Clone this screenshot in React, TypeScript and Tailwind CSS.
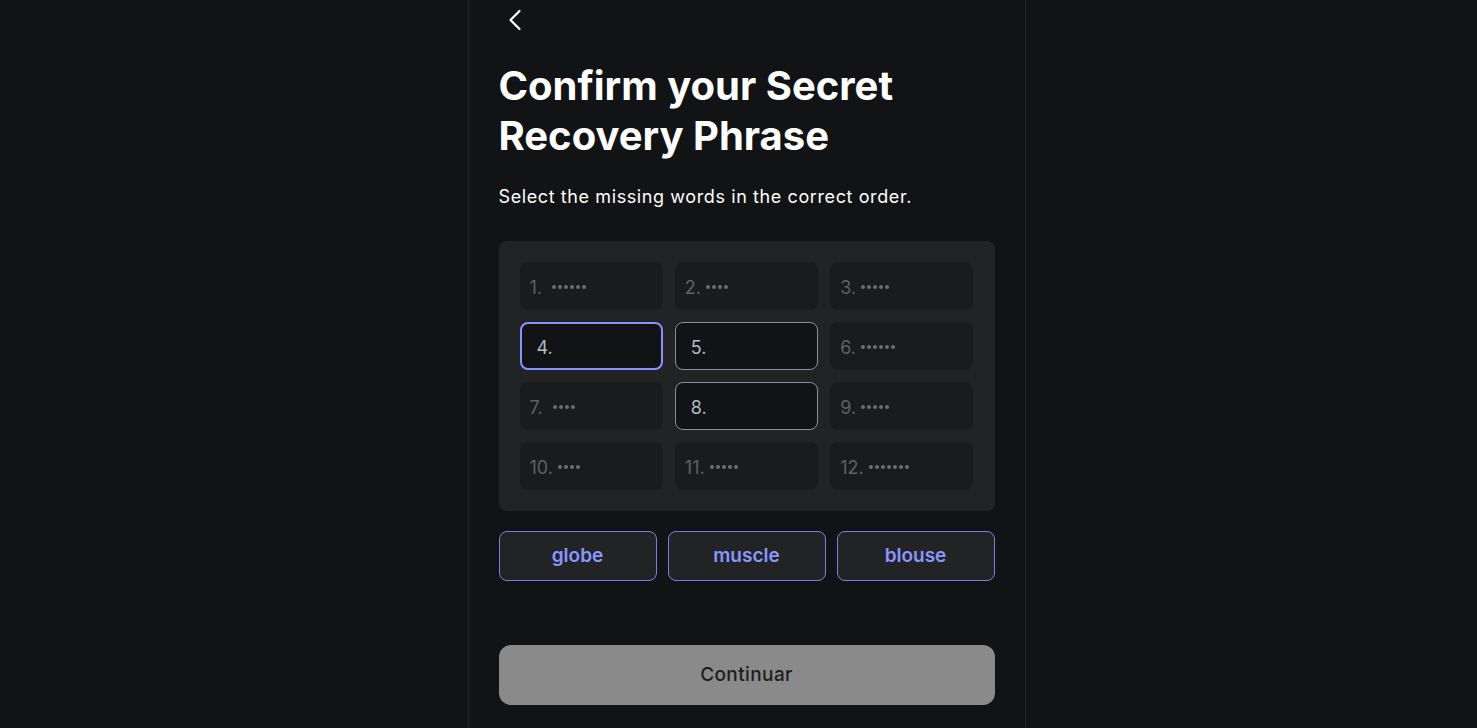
import React from "react";

const cells: { n: number; dots?: number; active?: "focus" | "empty" }[] = [
  { n: 1, dots: 6 },
  { n: 2, dots: 4 },
  { n: 3, dots: 5 },
  { n: 4, active: "focus" },
  { n: 5, active: "empty" },
  { n: 6, dots: 6 },
  { n: 7, dots: 4 },
  { n: 8, active: "empty" },
  { n: 9, dots: 5 },
  { n: 10, dots: 4 },
  { n: 11, dots: 5 },
  { n: 12, dots: 7 },
];

function Cell({ c }: { c: (typeof cells)[number] }) {
  if (c.active) {
    return (
      <div
        className={
          "h-12 rounded-lg bg-[#121314] flex items-center pt-[2px] text-[18px] text-[#b3bac9] " +
          (c.active === "focus"
            ? "border-2 border-[#8694ff] pl-[15px]"
            : "border border-[#8b8f99] pl-[15px]")
        }
      >
        {c.n}.
      </div>
    );
  }
  return (
    <div className="h-12 rounded-lg bg-[#1a1b1d] flex items-center pt-[2px] pl-[10px] text-[18px] text-[#5f6166]">
      <span>{c.n}.</span>
      <span className={"flex gap-[2px] " + (c.n === 1 || c.n === 7 ? "ml-[10px]" : "ml-[5px]")}>
        {Array.from({ length: c.dots || 0 }).map((_, i) => (
          <span key={i} className="w-[4px] h-[4px] rounded-full bg-[#6c6e73]" />
        ))}
      </span>
    </div>
  );
}

export default function App() {
  return (
    <div
      className="min-h-[728px] w-full bg-[#121314] flex justify-center pl-4"
      style={{ fontFamily: "Inter, 'Noto Sans', sans-serif" }}
    >
      <div className="w-[558px] h-[728px] border-x border-[#25262a] bg-[#121314] px-[30px] flex flex-col">
        <div className="h-[40px] pt-[9px]">
          <svg width="22" height="22" viewBox="0 0 22 22" className="ml-[7px]">
            <path d="M13.5 2 L4.5 11 L13.5 20" fill="none" stroke="#ffffff" strokeWidth="2.2" strokeLinecap="round" strokeLinejoin="round" />
          </svg>
        </div>
        <h1 className="mt-[21px] text-[40px] leading-[50px] font-bold text-white">
          Confirm your Secret
          <br />
          Recovery Phrase
        </h1>
        <p className="mt-[22px] text-[18px] leading-[28px] text-white tracking-[0.6px]">
          Select the missing words in the correct order.
        </p>
        <div className="mt-[30px] rounded-lg bg-[#222325] px-[21px] pt-[21px] pb-[21px] grid grid-cols-3 gap-x-3 gap-y-3">
          {cells.map((c) => (
            <Cell key={c.n} c={c} />
          ))}
        </div>
        <div className="mt-5 grid grid-cols-3 gap-[11px]">
          {["globe", "muscle", "blouse"].map((w) => (
            <button
              key={w}
              className="h-[50px] rounded-lg border border-[#7580e6] bg-[#222325] text-[19px] font-semibold text-[#8a96ff]"
            >
              {w}
            </button>
          ))}
        </div>
        <button className="mt-16 h-[60px] rounded-xl bg-[#8a8a8a] text-[19px] font-medium text-[#1c1c1e] tracking-[0.4px]">
          Continuar
        </button>
      </div>
    </div>
  );
}
